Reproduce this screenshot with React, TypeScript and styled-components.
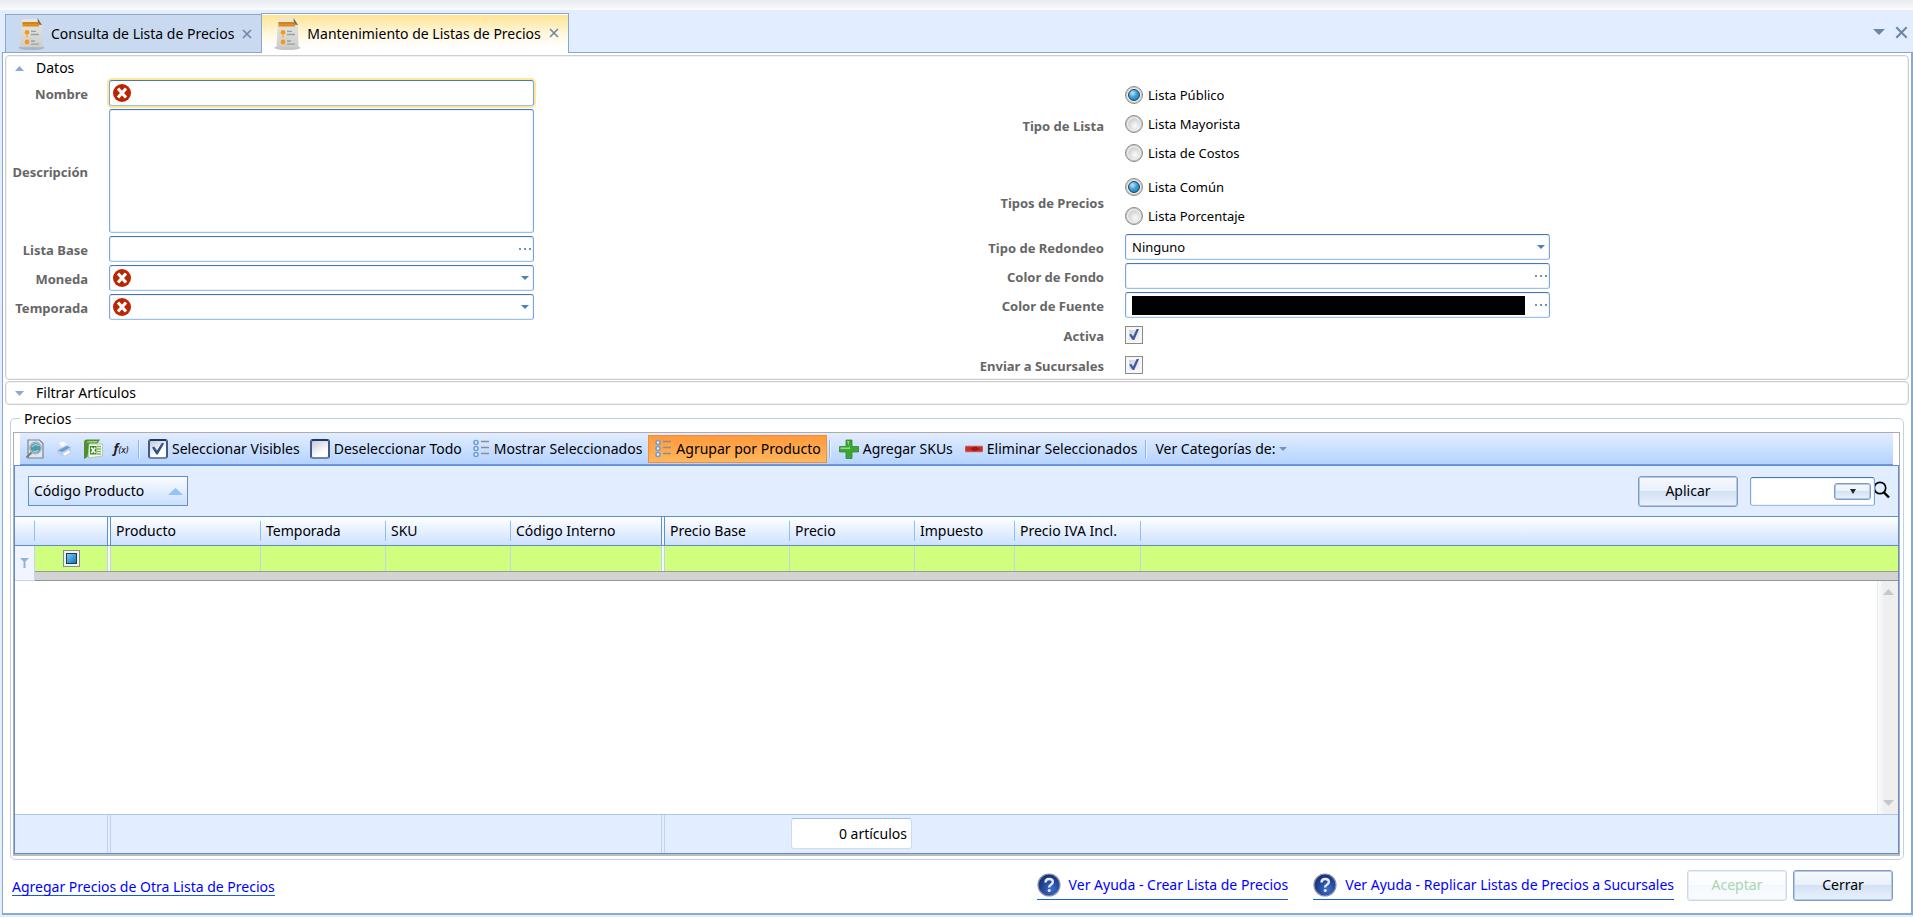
import React, { useId } from 'react';
import styled, { createGlobalStyle, css } from 'styled-components';

const GlobalStyle = createGlobalStyle`
  *, *::before, *::after { box-sizing: border-box; }
  body {
    margin: 0;
    background: #e2eeff;
    color: #000;
    font: 14px/20px "Noto Sans", "Open Sans", sans-serif;
  }
  button, input, select, textarea {
    font: inherit;
    color: inherit;
    margin: 0;
  }
`;

/* ---------- window ---------- */

const Window = styled.div`
  display: flex;
  flex-direction: column;
  min-height: 100vh;
`;

const TopStrip = styled.div`
  height: 10px;
  background: linear-gradient(#e9eaef, #fbfcfe);
`;

const TabBar = styled.div`
  display: flex;
  align-items: flex-end;
  height: 43px;
  margin-left: 2px;
  padding: 0 5px 0 3px;
  border-bottom: 1px solid #8ba5cb;
`;

const Tab = styled.div<{ $active?: boolean }>`
  display: flex;
  align-items: center;
  height: 38px;
  padding: 0 9px 0 12px;
  border: 1px solid #8ba5cb;
  border-width: 1px 0 0 1px;
  background: #c9daf0;
  ${p => p.$active && css`
    height: 40px;
    margin-bottom: -1px;
    border-right-width: 1px;
    background: linear-gradient(#fff, #fff) top / 100% 1px no-repeat,
      linear-gradient(#ffe391, #fff7dd 50%, #fff 85%);
  `}
`;

const TabTitle = styled.button`
  display: flex;
  align-items: center;
  gap: 6px;
  padding: 0;
  border: 0;
  background: none;
`;

const IconButton = styled.button`
  display: flex;
  align-items: center;
  justify-content: center;
  padding: 0;
  border: 0;
  background: none;
`;

const TabClose = styled(IconButton)`
  width: 10px;
  height: 24px;
  margin-left: 8px;
  align-items: flex-end;
  align-self: flex-start;
`;

const WindowTools = styled.div`
  display: flex;
  align-items: center;
  gap: 10px;
  height: 38px;
  margin-left: auto;
  padding-bottom: 2px;
`;

const Page = styled.main`
  flex: 1;
  display: flex;
  flex-direction: column;
  margin: 0 0 2px 2px;
  padding-top: 2px;
  border: 1px solid #8aabce;
  border-width: 0 2px 2px 1px;
  background: #fff;
`;

/* ---------- form ---------- */

const Expander = styled.section`
  margin: 0 2px 1px;
  border: 1px solid #cfcfcf;
  border-radius: 4px;
  box-shadow: inset 0 0 0 1px #f1f1f1;
`;

const ExpanderHeader = styled.button<{ $closed?: boolean }>`
  display: flex;
  align-items: center;
  gap: 12px;
  width: 100%;
  height: ${p => (p.$closed ? 22 : 24)}px;
  padding: 0 9px;
  border: 0;
  background: none;
`;

const FormColumns = styled.div`
  display: grid;
  grid-template-columns: 1fr 1fr;
  padding-bottom: 1px;
`;

const FormColumn = styled.div<{ $label: number }>`
  display: grid;
  grid-template-columns: ${p => p.$label}px minmax(0, 425px);
  align-content: start;
  align-items: center;
  gap: 3px 21px;
`;

const FieldLabel = styled.label`
  padding-top: 2px;
  color: #666;
  font-size: 13px;
  font-weight: 700;
  text-align: right;
  white-space: nowrap;
`;

const boxBorder = css`
  border: 1px solid;
  border-color: #4876b0 #7ba5dc #9ac1ee;
  border-radius: 3px;
  background: #fff;
  box-shadow: inset 0 0 0 1px #eaf2fc;
`;

const FieldBox = styled.div<{ $focus?: boolean; $picker?: boolean }>`
  ${boxBorder}
  display: flex;
  align-items: center;
  height: 26px;
  padding: 0 ${p => (p.$picker ? 1 : 4)}px 0 3px;
  ${p => p.$focus && css`box-shadow: 0 0 0 2px #ffe699;`}
`;

const TextInput = styled.input`
  flex: 1;
  min-width: 0;
  height: 20px;
  padding: 0 3px;
  border: 0;
  outline: 0;
  background: none;
`;

const SelectInput = styled.select`
  flex: 1;
  min-width: 0;
  height: 20px;
  padding: 0 3px;
  border: 0;
  outline: 0;
  appearance: none;
  background: none;
  font-size: 13px;
`;

const TextArea = styled.textarea`
  ${boxBorder}
  display: block;
  width: 100%;
  height: 124px;
  resize: none;
`;

const ColorSwatch = styled.button`
  flex: 1;
  height: 19px;
  margin: 0 10px 0 3px;
  border: 0;
  background: #000;
`;

const RadioGroup = styled.div<{ $last?: boolean }>`
  padding-bottom: ${p => (p.$last ? 1 : 2)}px;
`;

const RadioLabel = styled.label`
  display: flex;
  align-items: center;
  gap: 5px;
  height: 29px;
  font-size: 13px;
`;

const Radio = styled.input`
  appearance: none;
  width: 18px;
  height: 18px;
  padding: 2px;
  border: 1px solid #8c8c8c;
  border-radius: 50%;
  background: radial-gradient(circle at 60% 65%, #fbfbfb, #d4d7da 60%) content-box, #f2f2f2;
  background-clip: content-box, border-box;
  box-shadow: inset 0 0 0 1px #c4c4c4;
  &:checked {
    background: #f4f4f4;
  }
  &:checked::before {
    content: "";
    display: block;
    width: 12px;
    height: 12px;
    border: 1px solid #14405f;
    border-radius: 50%;
    background: radial-gradient(circle at 35% 30%, #bfe6fb, #3f9fd2 45%, #1672a8);
  }
`;

const CheckRow = styled.div`
  display: flex;
  align-items: center;
  height: 27px;
`;

const CheckBox = styled.input`
  appearance: none;
  width: 18px;
  height: 18px;
  padding: 2px;
  border: 1px solid #8a8b8b;
  background: linear-gradient(135deg, #cdd3dc, #f4f6f9) center / 10px 10px no-repeat, #f6f6f6;
  &::before {
    content: "";
    display: block;
    width: 12px;
    height: 12px;
    background: #44589c;
    clip-path: polygon(10% 52%, 26% 44%, 42% 66%, 72% 4%, 92% 4%, 52% 96%, 38% 96%);
  }
`;

/* ---------- grid ---------- */

const PriceGroup = styled.section`
  flex: 1;
  display: flex;
  flex-direction: column;
  margin: 12px 7px 0;
  padding: 0 3px 3px 2px;
  border: 1px solid #c1d1e4;
  border-radius: 5px;
`;

const GroupTitle = styled.h2`
  align-self: flex-start;
  height: 20px;
  margin: -10px 0 3px 7px;
  padding: 0 4px;
  background: #fff;
  font-size: 14px;
  font-weight: 400;
`;

const Frame = styled.div`
  flex: 1;
  display: flex;
  flex-direction: column;
  border: 1px solid #adadad;
  border-bottom: 2px solid #bcbcbc;
`;

const Toolbar = styled.div`
  display: flex;
  align-items: center;
  height: 32px;
  margin: 0 6px;
  border-bottom: 1px solid #6c9bdb;
  background: linear-gradient(#e2edff, #b5d3ff);
`;

const ToolIcons = styled.div`
  display: flex;
  gap: 9px;
  padding: 0 6px 0 5px;
`;

const ToolIcon = styled(IconButton)`
  min-width: 18px;
  height: 22px;
`;

const FxText = styled.span`
  width: 18px;
  color: #1c1c1c;
  font: italic 700 13px/20px "Noto Sans", sans-serif;
  white-space: nowrap;
`;

const FxSmall = styled.small`
  font-size: 9px;
  font-weight: 500;
`;

const Separator = styled.span`
  width: 2px;
  height: 18px;
  margin: 0 2px;
  border-left: 1px solid #94b4de;
  border-right: 1px solid #eaf2ff;
`;

const toolItem = css`
  display: flex;
  align-items: center;
  gap: 4px;
  height: 28px;
  white-space: nowrap;
`;

const ToolLabel = styled.label`
  ${toolItem}
  padding: 0 4px 0 6px;
`;

const ToolButton = styled.button<{ $active?: boolean }>`
  ${toolItem}
  padding: 0 5px;
  border: 1px solid transparent;
  background: none;
  ${p => p.$active && css`
    border-color: #f38d3c;
    background: linear-gradient(#ff9a3c, #ffb65c);
  `}
`;

const ToolCheck = styled.input`
  appearance: none;
  width: 20px;
  height: 20px;
  padding: 2px;
  border: 2px solid;
  border-color: #23365f #42598c #6e83b0;
  border-radius: 3px;
  background: linear-gradient(150deg, #c4c9d6, #fff 70%);
  &:checked::before {
    content: "";
    display: block;
    width: 12px;
    height: 12px;
    background: #34508a;
    clip-path: polygon(0 42%, 18% 34%, 42% 66%, 84% 0, 100% 8%, 48% 100%, 36% 100%);
  }
`;

const Grid = styled.div`
  flex: 1;
  display: flex;
  flex-direction: column;
  border: 1px solid #5f8fd0;
`;

const GroupPanel = styled.div`
  display: flex;
  align-items: center;
  height: 51px;
  padding: 0 8px 0 13px;
  border-bottom: 1px solid #5f8fd0;
  background: #e2eeff;
`;

const GroupChip = styled.button`
  display: flex;
  align-items: center;
  justify-content: space-between;
  width: 160px;
  height: 30px;
  margin-right: auto;
  padding: 0 4px 0 5px;
  border: 1px solid #5f8fd0;
  background: linear-gradient(#fafcff, #cadffd);
`;

const PushButton = styled.button`
  width: 100px;
  height: 31px;
  padding: 0;
  border: 1px solid #7f9cc9;
  border-radius: 3px;
  background: linear-gradient(#f6f9fe, #e9f1fb 49%, #d3e1f4 50%, #eaf2fd);
  box-shadow: inset 0 0 0 1px #b4c8e4;
  &:disabled {
    border-color: #ccd8ea;
    background: linear-gradient(#fdfeff, #fafcff 49%, #f4f8fd 50%, #fafcff);
    box-shadow: inset 0 0 0 1px #e6edf7;
    color: #a9d6b0;
  }
`;

const SearchBox = styled.div`
  ${boxBorder}
  display: flex;
  align-items: center;
  width: 125px;
  height: 29px;
  margin-left: 12px;
  padding: 0 3px 0 0;
`;

const DropButton = styled(PushButton)`
  display: flex;
  align-items: center;
  justify-content: center;
  flex: none;
  width: 37px;
  height: 17px;
`;

const Table = styled.table`
  width: 100%;
  table-layout: fixed;
  border-collapse: separate;
  border-spacing: 0;
`;

const Col = styled.col<{ $w?: number }>`
  width: ${p => (p.$w ? `${p.$w}px` : 'auto')};
`;

const HeadRow = styled.tr`
  height: 29px;
  background: linear-gradient(#fff, #cbe0ff);
`;

const HeadCell = styled.th<{ $edge?: 'line' | 'double' }>`
  padding: 0 0 0 5px;
  border-bottom: 1px solid #5f8fc8;
  font-weight: 400;
  text-align: left;
  white-space: nowrap;
  ${p => p.$edge === 'line' && css`
    background: linear-gradient(#93bdf5, #93bdf5) right center / 1px 20px no-repeat;
  `}
  ${p => p.$edge === 'double' && css`
    box-shadow: inset -1px 0 #5f8fd0, inset -3px 0 #f4f8ff, inset -4px 0 #5f8fd0;
  `}
`;

const FilterRow = styled.tr`
  height: 25px;
`;

const FilterCell = styled.td<{ $edge?: 'line' | 'double' }>`
  padding: 0;
  background: #d0ff80;
  ${p => p.$edge === 'line' && css`box-shadow: inset -1px 0 #c3d3e6;`}
  ${p => p.$edge === 'double' && css`
    box-shadow: inset -1px 0 #c3d3e6, inset -3px 0 #f6faff, inset -4px 0 #c3d3e6;
  `}
`;

const FilterMark = styled.td`
  padding: 0 0 0 5px;
  border-right: 1px solid #c3d5f0;
  border-bottom: 1px solid #c3d5f0;
  background: #f0f5ff;
`;

const SplitRow = styled.tr`
  height: 10px;
`;

const SplitCell = styled.td`
  padding: 0;
  border-top: 1px solid #999;
  border-bottom: 1px solid #8f959e;
  background: #d3d3d3;
`;

const TriState = styled.input`
  appearance: none;
  display: block;
  width: 17px;
  height: 17px;
  margin-left: 28px;
  padding: 2px;
  border: 1px solid #8a8b8b;
  background: #f2f2f2;
  &::before {
    content: "";
    display: block;
    width: 11px;
    height: 11px;
    border: 1px solid #173a5c;
    background: linear-gradient(135deg, #7cc8f2, #1674b8);
  }
`;

const GridBody = styled.div`
  flex: 1;
  display: flex;
  justify-content: flex-end;
  min-height: 120px;
  background: #fff;
`;

const ScrollTrack = styled.div`
  display: flex;
  flex-direction: column;
  align-items: center;
  justify-content: space-between;
  width: 21px;
  padding: 8px 0 8px 1px;
  border-left: 1px solid #e4eefb;
  background: linear-gradient(90deg, #fcfcfc, #efefef 30%);
`;

const GridFooter = styled.div`
  display: flex;
  height: 39px;
  border-top: 1px solid #adc6ea;
  background: #e2eeff;
`;

const FooterSpan = styled.div<{ $w: number }>`
  flex: none;
  width: ${p => p.$w}px;
  box-shadow: inset -1px 0 #c3d3ee, inset -3px 0 #e2eeff, inset -4px 0 #c3d3ee;
`;

const FooterRest = styled.div`
  flex: 1;
  padding: 3px 0 0 126px;
`;

const Summary = styled.output`
  display: block;
  width: 121px;
  height: 31px;
  padding: 0 4px;
  border: 1px solid #ccdcf2;
  border-top-color: #a3bfe4;
  border-radius: 3px;
  background: #fff;
  line-height: 30px;
  text-align: right;
`;

/* ---------- bottom bar ---------- */

const ActionBar = styled.footer`
  display: flex;
  align-items: center;
  height: 53px;
  padding: 0 18px 3px 9px;
`;

const PlainLink = styled.a`
  margin: 4px auto 0 0;
  border-bottom: 1px solid #1560d8;
  color: #00f;
  line-height: 16px;
  text-decoration: none;
`;

const HelpLink = styled.a`
  display: flex;
  align-items: center;
  gap: 8px;
  height: 29px;
  margin-right: 25px;
  border-bottom: 1px solid #1560d8;
  color: #00f;
  text-decoration: none;
`;

const Actions = styled.div`
  display: flex;
  gap: 6px;
  margin-left: -12px;
`;

/* ---------- drawings ---------- */

const DocIcon = () => {
  const id = useId();
  return (
    <svg width="27" height="32" viewBox="0 0 27 30" preserveAspectRatio="none" aria-hidden="true">
      <defs>
        <linearGradient id={id} x1="0" y1="0" x2="0" y2="1">
          <stop offset="0" stopColor="#e6e6e3" />
          <stop offset="1" stopColor="#cdcdca" />
        </linearGradient>
      </defs>
      <ellipse cx="13.5" cy="28" rx="13" ry="2" fill="#8f96a0" opacity=".55" />
      <path d="M4 1h16l4 5 .5 21.5h-22z" fill={`url(#${id})`} />
      <path d="M19.500 0l4.500 6.500-4-.5z" fill="#6b6b6b" />
      <rect x="4.500" y="4" width="16.500" height="4" fill="#e08e1c" />
      <path d="M4.500 4h16.500v1.200h-16.500z" fill="#c97a10" />
      <circle cx="9" cy="13.500" r="2.300" fill="#f79a12" />
      <path d="M8 15h2v3h-2z" fill="#f9b65a" />
      <circle cx="9" cy="22.500" r="2.300" fill="#f79a12" />
      <path d="M13 12.500h5M13 15.500h8M13 21.500h4M13 24.500h8" stroke="#97a3a6" strokeWidth="1.300" />
    </svg>
  );
};

const Cross = ({ size }: { size: number }) => (
  <svg width={size} height={size} viewBox="0 0 10 10" aria-hidden="true">
    <path d="M1 1l8 8M9 1l-8 8" stroke="#6d86a8" strokeWidth="1.600" />
  </svg>
);

const Triangle = ({ w, h, color, up }: { w: number; h: number; color: string; up?: boolean }) => (
  <svg width={w} height={h} viewBox="0 0 10 5" preserveAspectRatio="none" aria-hidden="true">
    <path d={up ? 'M0 5l5-5 5 5z' : 'M0 0h10l-5 5z'} fill={color} />
  </svg>
);

const ErrorIcon = () => (
  <svg width="18" height="18" viewBox="0 0 18 18" role="img" aria-label="Error">
    <circle cx="9" cy="9" r="9" fill="#bc2500" />
    <path d="M5 4.500l8 9M13 4.500l-8 9" stroke="#fff" strokeWidth="3.200" />
  </svg>
);

const Dots = () => (
  <svg width="13" height="12" viewBox="0 0 13 12" aria-hidden="true">
    <path d="M0 5h2v2h-2zM5 5h2v2h-2zM10 5h2v2h-2z" fill="#6f92c4" />
  </svg>
);

const PreviewIcon = () => (
  <svg width="20" height="20" viewBox="0 0 20 20" aria-hidden="true">
    <path d="M3 1h11.500l3.500 3.500v14.500h-15z" fill="#dfe6ee" stroke="#7c838a" strokeWidth="1.200" />
    <circle cx="10.500" cy="9" r="5.600" fill="#4b9cb0" stroke="#aab4bc" strokeWidth="1.600" />
    <path d="M7 8c2-3 5-3 7-1M8 12c2 1 4 1 5-1" stroke="#a7d6de" strokeWidth="1.300" fill="none" />
    <path d="M6.500 13.500l-5 5" stroke="#767d84" strokeWidth="2.200" />
  </svg>
);

const PrintIcon = () => (
  <svg width="20" height="20" viewBox="0 0 20 20" aria-hidden="true">
    <path d="M4 3l6-1 4 4-6 3z" fill="#f7fafd" stroke="#cfd8e4" strokeWidth=".6" />
    <path d="M3 11l9-5 5 2v4l-9 5-5-2.500z" fill="#c4cfdf" />
    <path d="M4 11.500l9-4.500 3 1.500-8 4.500z" fill="#5d9fdf" />
    <path d="M8 15l7-4 2 2-6 4z" fill="#fff" stroke="#b7c3d3" strokeWidth=".6" />
  </svg>
);

const ExcelIcon = () => (
  <svg width="20" height="20" viewBox="0 0 20 20" aria-hidden="true">
    <path d="M1 3q0-2.500 3-2.500h13l-2.500 4h-8l-2 13.500-3.500 2z" fill="#4e8f2f" />
    <path d="M3 3.500q1-1.500 3-1.500h9l-1.500 1.500h-8z" fill="#a5cf86" />
    <path d="M6 5h13.500v12l-14 2z" fill="#f3f8ef" stroke="#9cbf86" strokeWidth=".7" />
    <path d="M14 7.500h4M14 10h4M14 12.500h4M14 15h4" stroke="#85b865" strokeWidth="1.400" />
    <path d="M7 7h6.500v8.500h-6.500z" fill="#3f8a29" />
    <path d="M8.300 8.500l4 5.500M12.300 8.500l-4 5.500" stroke="#fff" strokeWidth="1.500" />
  </svg>
);

const ListIcon = () => (
  <svg width="18" height="20" viewBox="0 0 18 20" aria-hidden="true">
    {[3.5, 9.5, 15.5].map(y => (
      <g key={y}>
        <circle cx="4" cy={y} r="2" fill="#eaf3fc" stroke="#6f9fd4" strokeWidth="1.600" />
        <path d={`M9 ${y - 1}h8`} stroke="#8b8f94" strokeWidth="1.500" />
      </g>
    ))}
  </svg>
);

const PlusIcon = () => (
  <svg width="20" height="20" viewBox="0 0 20 20" aria-hidden="true">
    <path d="M7 1h6v6.500h6.500v5.500h-6.500v6.500h-6v-6.500h-6.500v-5.500h6.500z" fill="#3aa82e" stroke="#3b7f3a" strokeWidth=".8" />
    <path d="M8 2h2v6.500h-8.500v1.500h10z" fill="#8fdc7c" />
  </svg>
);

const MinusIcon = () => (
  <svg width="18" height="20" viewBox="0 0 18 20" aria-hidden="true">
    <rect x="0" y="7" width="18" height="6" rx="1" fill="#c8302a" stroke="#d98a8a" strokeWidth=".8" />
    <path d="M5 9l6-1.500 4 2.500-6 2.500z" fill="#8e0f0f" opacity=".7" />
  </svg>
);

const SearchIcon = () => (
  <svg width="15" height="20" viewBox="0 0 15 20" aria-hidden="true">
    <circle cx="5" cy="7" r="5.700" fill="none" stroke="#000" strokeWidth="1.700" />
    <path d="M8.500 11l5.500 5.500" stroke="#000" strokeWidth="2.400" />
  </svg>
);

const FunnelIcon = () => (
  <svg width="9" height="10" viewBox="0 0 9 10" aria-hidden="true">
    <path d="M0 0h9l-3.500 3.500v6.500h-2v-6.500z" fill="#8fb2e2" />
  </svg>
);

const HelpIcon = () => {
  const id = useId();
  return (
    <svg width="24" height="24" viewBox="0 0 24 24" aria-hidden="true">
      <defs>
        <radialGradient id={id} cx=".6" cy=".7" r=".8">
          <stop offset="0" stopColor="#3f6fce" />
          <stop offset=".6" stopColor="#1f3f8e" />
          <stop offset="1" stopColor="#16275c" />
        </radialGradient>
      </defs>
      <circle cx="12" cy="12" r="11" fill={`url(#${id})`} stroke="#8b95ac" strokeWidth="1.200" />
      <path d="M8.500 9.500q0-3.500 3.700-3.500t3.600 3q0 1.600-1.900 2.700t-1.700 2.800" fill="none" stroke="#e6ebf6" strokeWidth="2.400" />
      <circle cx="12.200" cy="17.500" r="1.500" fill="#e6ebf6" />
    </svg>
  );
};

/* ---------- composed fields ---------- */

const PickerField = ({ id, label, filled }: { id: string; label: string; filled?: boolean }) => (
  <>
    <FieldLabel htmlFor={id}>{label}</FieldLabel>
    <FieldBox $picker>
      {filled ? <ColorSwatch id={id} type="button" /> : <TextInput id={id} />}
      <IconButton type="button" aria-label={`Elegir ${label}`}><Dots /></IconButton>
    </FieldBox>
  </>
);

const SelectField = ({ id, label, value = '', error }: { id: string; label: string; value?: string; error?: boolean }) => (
  <>
    <FieldLabel htmlFor={id}>{label}</FieldLabel>
    <FieldBox>
      {error && <ErrorIcon />}
      <SelectInput id={id} defaultValue={value}>
        <option value={value}>{value}</option>
      </SelectInput>
      <Triangle w={8} h={4} color="#4d7fc0" />
    </FieldBox>
  </>
);

const RadioField = ({ label, name, options, last }: { label: string; name: string; options: string[]; last?: boolean }) => (
  <>
    <FieldLabel as="span" id={`${name}-label`}>{label}</FieldLabel>
    <RadioGroup role="radiogroup" aria-labelledby={`${name}-label`} $last={last}>
      {options.map((o, i) => (
        <RadioLabel key={o}>
          <Radio type="radio" name={name} defaultChecked={i === 0} />
          {o}
        </RadioLabel>
      ))}
    </RadioGroup>
  </>
);

const CheckField = ({ id, label }: { id: string; label: string }) => (
  <>
    <FieldLabel htmlFor={id}>{label}</FieldLabel>
    <CheckRow><CheckBox type="checkbox" id={id} defaultChecked /></CheckRow>
  </>
);

type Column = { title: string; width?: number; edge?: 'line' | 'double' };

const columns: Column[] = [
  { title: '', width: 76, edge: 'double' },
  { title: 'Producto', width: 150, edge: 'line' },
  { title: 'Temporada', width: 125, edge: 'line' },
  { title: 'SKU', width: 125, edge: 'line' },
  { title: 'Código Interno', width: 154, edge: 'double' },
  { title: 'Precio Base', width: 125, edge: 'line' },
  { title: 'Precio', width: 125, edge: 'line' },
  { title: 'Impuesto', width: 100, edge: 'line' },
  { title: 'Precio IVA Incl.', width: 126, edge: 'line' },
  { title: '' },
];

export default function App() {
  return (
    <Window>
      <GlobalStyle />
      <TopStrip />
      <TabBar>
        <Tab>
          <TabTitle type="button"><DocIcon />Consulta de Lista de Precios</TabTitle>
          <TabClose type="button" aria-label="Cerrar pestaña"><Cross size={10} /></TabClose>
        </Tab>
        <Tab $active>
          <TabTitle type="button"><DocIcon />Mantenimiento de Listas de Precios</TabTitle>
          <TabClose type="button" aria-label="Cerrar pestaña"><Cross size={10} /></TabClose>
        </Tab>
        <WindowTools>
          <IconButton type="button" aria-label="Ventanas"><Triangle w={12} h={6} color="#6d86a8" /></IconButton>
          <IconButton type="button" aria-label="Cerrar ventana"><Cross size={13} /></IconButton>
        </WindowTools>
      </TabBar>

      <Page>
        <Expander>
          <ExpanderHeader type="button">
            <Triangle w={9} h={5} color="#8ea8d0" up />Datos
          </ExpanderHeader>
          <FormColumns>
            <FormColumn $label={82}>
              <FieldLabel htmlFor="nombre">Nombre</FieldLabel>
              <FieldBox $focus><ErrorIcon /><TextInput id="nombre" /></FieldBox>
              <FieldLabel htmlFor="descripcion">Descripción</FieldLabel>
              <TextArea id="descripcion" />
              <PickerField id="lista-base" label="Lista Base" />
              <SelectField id="moneda" label="Moneda" error />
              <SelectField id="temporada" label="Temporada" error />
            </FormColumn>
            <FormColumn $label={147}>
              <RadioField label="Tipo de Lista" name="tipo-lista" options={['Lista Público', 'Lista Mayorista', 'Lista de Costos']} />
              <RadioField label="Tipos de Precios" name="tipo-precios" options={['Lista Común', 'Lista Porcentaje']} last />
              <SelectField id="redondeo" label="Tipo de Redondeo" value="Ninguno" />
              <PickerField id="color-fondo" label="Color de Fondo" />
              <PickerField id="color-fuente" label="Color de Fuente" filled />
              <CheckField id="activa" label="Activa" />
              <CheckField id="enviar" label="Enviar a Sucursales" />
            </FormColumn>
          </FormColumns>
        </Expander>

        <Expander>
          <ExpanderHeader type="button" $closed>
            <Triangle w={9} h={5} color="#8ea8d0" />Filtrar Artículos
          </ExpanderHeader>
        </Expander>

        <PriceGroup aria-labelledby="precios">
          <GroupTitle id="precios">Precios</GroupTitle>
          <Frame>
            <Toolbar>
              <ToolIcons>
                <ToolIcon type="button" aria-label="Vista previa"><PreviewIcon /></ToolIcon>
                <ToolIcon type="button" aria-label="Imprimir"><PrintIcon /></ToolIcon>
                <ToolIcon type="button" aria-label="Excel"><ExcelIcon /></ToolIcon>
                <ToolIcon type="button"><FxText>f<FxSmall>(x)</FxSmall></FxText></ToolIcon>
              </ToolIcons>
              <Separator />
              <ToolLabel><ToolCheck type="checkbox" defaultChecked />Seleccionar Visibles</ToolLabel>
              <ToolLabel><ToolCheck type="checkbox" />Deseleccionar Todo</ToolLabel>
              <ToolButton type="button"><ListIcon />Mostrar Seleccionados</ToolButton>
              <ToolButton type="button" $active><ListIcon />Agrupar por Producto</ToolButton>
              <Separator />
              <ToolButton type="button"><PlusIcon />Agregar SKUs</ToolButton>
              <ToolButton type="button"><MinusIcon />Eliminar Seleccionados</ToolButton>
              <Separator />
              <ToolButton type="button">
                Ver Categorías de:<Triangle w={8} h={4} color="#6f93c4" />
              </ToolButton>
            </Toolbar>

            <Grid>
              <GroupPanel>
                <GroupChip type="button">
                  Código Producto<Triangle w={15} h={7} color="#93c1fb" up />
                </GroupChip>
                <PushButton type="button">Aplicar</PushButton>
                <SearchBox>
                  <TextInput aria-label="Buscar" />
                  <DropButton type="button" aria-label="Opciones de búsqueda"><Triangle w={6} h={5} color="#222" /></DropButton>
                </SearchBox>
                <IconButton type="button" aria-label="Buscar"><SearchIcon /></IconButton>
              </GroupPanel>

              <Table>
                <colgroup>
                  <Col $w={20} />
                  {columns.map((c, i) => <Col key={i} $w={c.width} />)}
                </colgroup>
                <thead>
                  <HeadRow>
                    <HeadCell $edge="line" />
                    {columns.map((c, i) => <HeadCell key={i} $edge={c.edge}>{c.title}</HeadCell>)}
                  </HeadRow>
                </thead>
                <tbody>
                  <FilterRow>
                    <FilterMark rowSpan={2}><FunnelIcon /></FilterMark>
                    {columns.map((c, i) => (
                      <FilterCell key={i} $edge={c.edge}>
                        {i === 0 && <TriState type="checkbox" aria-label="Filtrar seleccionados" />}
                      </FilterCell>
                    ))}
                  </FilterRow>
                  <SplitRow><SplitCell colSpan={columns.length} /></SplitRow>
                </tbody>
              </Table>

              <GridBody>
                <ScrollTrack>
                  <Triangle w={11} h={6} color="#c3c8cf" up />
                  <Triangle w={11} h={6} color="#c3c8cf" />
                </ScrollTrack>
              </GridBody>

              <GridFooter>
                <FooterSpan $w={96} />
                <FooterSpan $w={554} />
                <FooterRest><Summary>0 artículos</Summary></FooterRest>
              </GridFooter>
            </Grid>
          </Frame>
        </PriceGroup>

        <ActionBar>
          <PlainLink href="#agregar">Agregar Precios de Otra Lista de Precios</PlainLink>
          <HelpLink href="#ayuda-crear"><HelpIcon />Ver Ayuda - Crear Lista de Precios</HelpLink>
          <HelpLink href="#ayuda-replicar"><HelpIcon />Ver Ayuda - Replicar Listas de Precios a Sucursales</HelpLink>
          <Actions>
            <PushButton type="button" disabled>Aceptar</PushButton>
            <PushButton type="button">Cerrar</PushButton>
          </Actions>
        </ActionBar>
      </Page>
    </Window>
  );
}
